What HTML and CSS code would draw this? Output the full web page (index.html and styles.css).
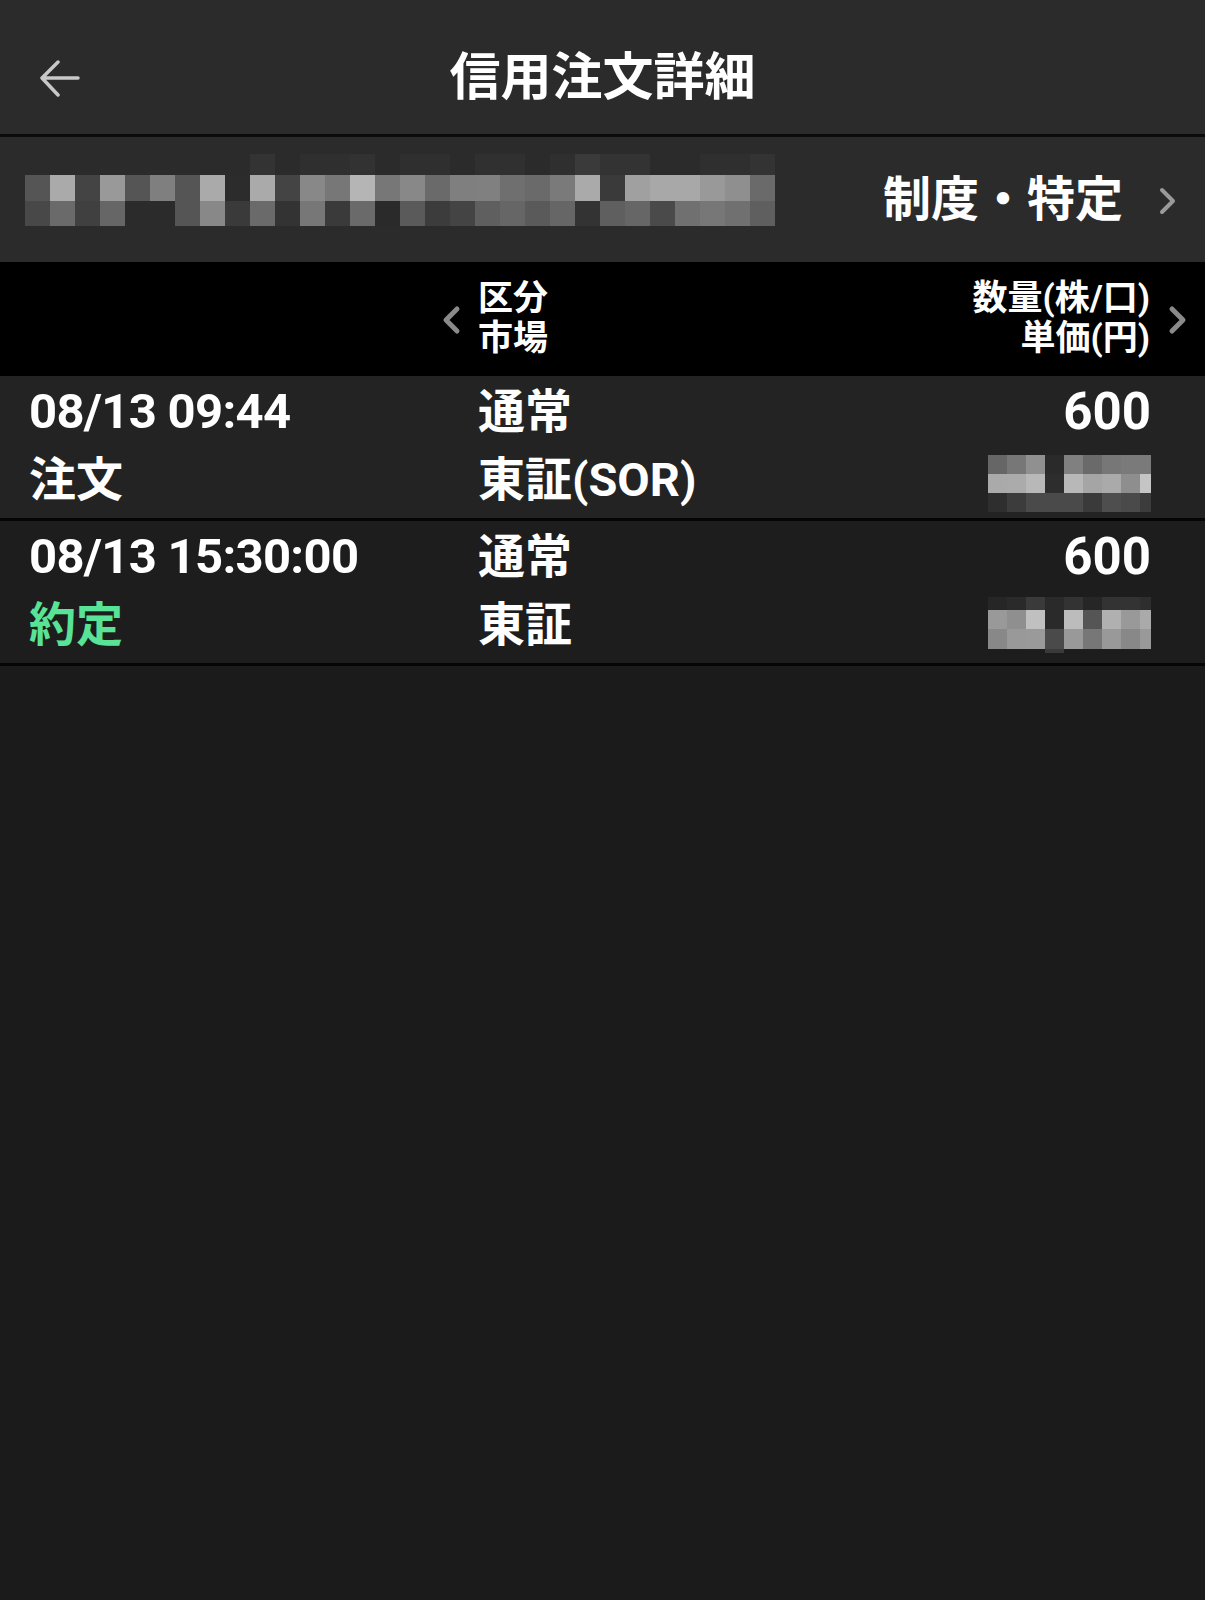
FILE: index.html
```html
<!DOCTYPE html>
<html lang="ja">
<head>
    <meta charset="UTF-8">
    <meta name="viewport" content="width=device-width, initial-scale=1.0">
    <title>信用注文詳細</title>
    <link rel="stylesheet" href="styles.css">
</head>
<body>
    <header class="topbar">
        <button class="back" aria-label="戻る">
            <svg width="40" height="40" viewBox="0 0 40 40">
                <path d="M38 18 H3 M18 2 L2 18 L18 35" fill="none" stroke="#c8c8c8" stroke-width="3.5" stroke-linecap="round" stroke-linejoin="round"/>
            </svg>
        </button>
        <h1 class="title">信用注文詳細</h1>
        <div class="spacer"></div>
    </header>

    <!-- Account row (name is pixelated) -->
    <div class="account">
        <div class="mosaic mosaic-name" id="accountMosaic"></div>
        <div class="account-type">制度・特定</div>
        <svg class="account-arrow" width="19" height="28" viewBox="0 0 19 28">
            <path d="M4 3 L15 14 L4 25" fill="none" stroke="#9a9a9a" stroke-width="4" stroke-linecap="round" stroke-linejoin="round"/>
        </svg>
    </div>

    <!-- Column headings -->
    <div class="table-head">
        <svg class="head-arrow" width="20" height="30" viewBox="0 0 20 30">
            <path d="M16 4 L5 15 L16 26" fill="none" stroke="#8a8a8a" stroke-width="5" stroke-linecap="round" stroke-linejoin="round"/>
        </svg>
        <div class="head-label">区分<br>市場</div>
        <div class="head-label head-right">数量(株/口)<br>単価(円)</div>
        <svg class="head-arrow" width="20" height="30" viewBox="0 0 20 30">
            <path d="M4 4 L15 15 L4 26" fill="none" stroke="#8a8a8a" stroke-width="5" stroke-linecap="round" stroke-linejoin="round"/>
        </svg>
    </div>

    <div class="list">
        <div class="row row-order">
            <div class="cell time">08/13 09:44</div>
            <div class="cell">通常</div>
            <div class="cell num qty">600</div>
            <div class="cell">注文</div>
            <div class="cell">東証(SOR)</div>
            <div class="cell num"><div class="mosaic mosaic-price" id="price1"></div></div>
        </div>
        <div class="row row-exec">
            <div class="cell time">08/13 15:30:00</div>
            <div class="cell">通常</div>
            <div class="cell num qty">600</div>
            <div class="cell status-done">約定</div>
            <div class="cell">東証</div>
            <div class="cell num"><div class="mosaic mosaic-price mosaic-tail" id="price2"></div></div>
        </div>
    </div>

    <script>
        // Redacted blocks, one colour per cell, row by row
        const accountCells = [
            ['#2b2b2b','#2b2b2b','#2b2b2b','#2b2b2b','#2b2b2b','#2b2b2b','#2b2b2b','#2b2b2b','#2b2b2b','#333','#2b2b2b','#2f2f2f','#2f2f2f','#323232','#2b2b2b','#2f2f2f','#2f2f2f','#2b2b2b','#303030','#303030','#2b2b2b','#2f2f2f','#3a3a3a','#333','#333','#2b2b2b','#2b2b2b','#2f2f2f','#2f2f2f','#333'],
            ['#555','#aaa','#444','#999','#555','#7f7f7f','#555','#aaa','#2c2c2c','#aaa','#444','#888','#777','#b5b5b5','#777','#888','#6a6a6a','#7f7f7f','#808080','#6f6f6f','#6a6a6a','#7a7a7a','#aaa','#3a3a3a','#a0a0a0','#a8a8a8','#a8a8a8','#999','#8f8f8f','#6a6a6a'],
            ['#484848','#6a6a6a','#404040','#666','#2b2b2b','#2b2b2b','#555','#888','#3a3a3a','#6a6a6a','#333','#777','#3a3a3a','#6a6a6a','#2a2a2a','#5a5a5a','#3c3c3c','#444','#5f5f5f','#666','#5a5a5a','#666','#333','#5f5f5f','#666','#4a4a4a','#707070','#777','#707070','#5f5f5f']
        ];
        const price1Cells = [
            ['#666','#777','#909090','#2a2a2a','#808080','#6a6a6a','#777','#7a7a7a','#7a7a7a'],
            ['#aaa','#ababab','#b8b8b8','#2d2d2d','#b8b8b8','#a5a5a5','#aaa','#8e8e8e','#c5c5c5'],
            ['#2e2e2e','#3c3c3c','#4a4a4a','#4a4a4a','#4a4a4a','#3a3a3a','#4e4e4e','#4a4a4a','#3c3c3c']
        ];
        const price2Cells = [
            ['#262626','#2a2a2a','#3a3a3a','#2a2a2a','#333','#262626','#333','#333','#2e2e2e'],
            ['#999','#8f8f8f','#c0c0c0','#2a2a2a','#bcbcbc','#555','#b0b0b0','#999','#aaa'],
            ['#888','#999','#9a9a9a','#4a4a4a','#999','#777','#999','#888','#999'],
            ['transparent','transparent','transparent','#3a3a3a','transparent','transparent','transparent','transparent','transparent']
        ];

        function fillMosaic(id, rows) {
            const box = document.getElementById(id);
            rows.forEach(row => {
                row.forEach(colour => {
                    const cell = document.createElement('span');
                    cell.style.background = colour;
                    box.appendChild(cell);
                });
            });
        }

        fillMosaic('accountMosaic', accountCells);
        fillMosaic('price1', price1Cells);
        fillMosaic('price2', price2Cells);
    </script>
</body>
</html>
```

FILE: styles.css
```css
body {
    margin: 0;
    padding: 0;
    width: 1205px;
    min-height: 1600px;
    background-color: #1b1b1b;
    color: #fff;
    font-family: Roboto, "Noto Sans CJK JP", "Noto Sans", sans-serif;
    font-weight: 700;
}

/* Top bar */
.topbar {
    display: flex;
    align-items: center;
    height: 134px;
    background-color: #2b2b2b;
    border-bottom: 3px solid #0b0b0b;
}

.back {
    width: 120px;
    height: 134px;
    padding: 0 0 0 40px;
    background: none;
    border: none;
    display: flex;
    align-items: center;
    cursor: pointer;
}

.back svg {
    margin-top: 25px;
}

.title {
    flex: 1;
    margin: 0;
    padding-top: 11px;
    text-align: center;
    font-size: 51px;
    font-weight: 700;
}

.spacer {
    width: 120px;
}

/* Account row */
.account {
    display: flex;
    align-items: center;
    height: 125px;
    padding: 0 28px 0 25px;
    background-color: #2b2b2b;
}

.mosaic {
    display: grid;
}

.mosaic-name {
    grid-template-columns: repeat(30, 25px);
    grid-template-rows: 21px 26px 25px;
    margin-bottom: 20px;
}

.account-type {
    margin-left: auto;
    font-size: 48px;
    line-height: 1;
}

.account-arrow {
    margin-left: 35px;
    margin-top: 2px;
}

/* Column headings */
.table-head {
    display: flex;
    align-items: center;
    height: 114px;
    padding: 0 17px 0 441px;
    background-color: #000;
}

.head-label {
    font-size: 35px;
    line-height: 40px;
    margin-left: 17px;
}

.head-right {
    margin-left: auto;
    margin-right: 18px;
    text-align: right;
}

.head-arrow {
    margin-top: 1px;
}

/* Rows */
.row {
    display: grid;
    grid-template-columns: 449px 1fr auto;
    grid-template-rows: 68px 68px;
    padding: 2px 54px 4px 29px;
    font-size: 47px;
    line-height: 68px;
    border-bottom: 3px solid #050505;
}

.row-order {
    background-color: #232323;
}

.row-exec {
    background-color: #1d1d1d;
}

.cell {
    white-space: nowrap;
}

.time {
    font-size: 49px;
    letter-spacing: -0.7px;
}

.qty {
    font-size: 51px;
}

.num {
    text-align: right;
    display: flex;
    justify-content: flex-end;
    align-items: center;
}

.status-done {
    color: #58e396;
}

.mosaic-price {
    grid-template-columns: repeat(8, 19px) 11px;
    grid-template-rows: 19px 19px 19px;
    margin-top: 6px;
}

.mosaic-tail {
    grid-template-rows: 13px 19px 20px 4px;
    margin-top: 0;
}
```
